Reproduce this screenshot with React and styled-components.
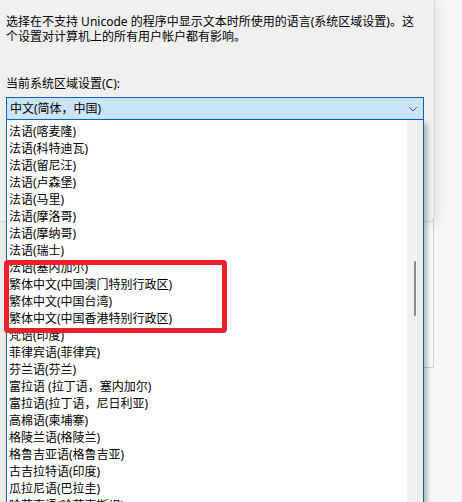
import React from "react";
import styled, { createGlobalStyle } from "styled-components";

const GlobalStyle = createGlobalStyle`
	html, body {
		margin: 0;
		padding: 0;
		background: #f6f6f6;
	}
	body {
		font-family: "Noto Sans", "Noto Sans CJK SC", sans-serif;
		font-size: 12px;
		color: #000000;
	}
`;

const Screen = styled.div`
	position: relative;
	width: 462px;
	height: 502px;
	overflow: hidden;
	background: linear-gradient(90deg, #ececec 0px, #f4f4f4 60px, #f7f7f7 100%);
`;

// window sitting behind the dialog, only its right edge peeks out
const BehindFrame = styled.div`
	position: absolute;
	left: 300px;
	top: 180px;
	width: 132px;
	height: 186px;
	border: 1px solid #cfcfcf;
	background: linear-gradient(90deg, #f3f3f3, #fafafa);
`;

const Dialog = styled.div`
	position: relative;
	width: 435px;
	height: 222px;
	box-sizing: border-box;
	background: #f0f0f0;
	border-right: 1px solid #d6d6d6;
	border-bottom: 1px solid #d6d6d6;
	border-bottom-right-radius: 6px;
	box-shadow: 4px 0 14px rgba(0, 0, 0, 0.08);
	padding: 14px 0 0 6px;
`;

const Description = styled.p`
	margin: 0;
	line-height: 15px;
	white-space: nowrap;
`;

const FieldLabel = styled.div`
	margin-top: 32px;
	line-height: 15px;
`;

const ComboWrap = styled.div`
	position: relative;
	margin-top: 6px;
	width: 418px;
`;

const ComboBox = styled.div`
	display: flex;
	align-items: center;
	justify-content: space-between;
	height: 23px;
	box-sizing: border-box;
	padding: 0 4px 0 3px;
	background: #cce4f7;
	border: 1px solid #0067c0;
`;

const ComboText = styled.span`
	line-height: 21px;
`;

const Chevron = styled.svg`
	width: 10px;
	height: 6px;
	margin-right: 1px;
`;

const DropList = styled.div`
	position: absolute;
	left: 0;
	top: 23px;
	width: 418px;
	height: 400px;
	box-sizing: border-box;
	display: flex;
	background: #ffffff;
	border-left: 1px solid #0067c0;
	border-right: 1px solid #0067c0;
	box-shadow: 3px 3px 5px rgba(0, 0, 0, 0.28);
	z-index: 2;
`;

const Items = styled.ul`
	flex: 1;
	margin: 0;
	padding: 3px 0 0 2px;
	list-style: none;
`;

const Item = styled.li`
	height: 17px;
	line-height: 17px;
	white-space: nowrap;
`;

const ScrollTrack = styled.div`
	display: flex;
	justify-content: center;
	align-items: flex-start;
	width: 16px;
	padding-top: 141px;
	box-sizing: border-box;
	background: #f0f0f0;
`;

const Thumb = styled.div`
	width: 2px;
	height: 55px;
	border-radius: 1px;
	background: #8a8a8a;
`;

const Highlight = styled.div`
	position: absolute;
	left: 4px;
	top: 260px;
	width: 223px;
	height: 73px;
	box-sizing: border-box;
	border: 5px solid #e8202b;
	border-radius: 4px;
	z-index: 3;
`;

const locales = [
	"法语(喀麦隆)",
	"法语(科特迪瓦)",
	"法语(留尼汪)",
	"法语(卢森堡)",
	"法语(马里)",
	"法语(摩洛哥)",
	"法语(摩纳哥)",
	"法语(瑞士)",
	"法语(塞内加尔)",
	"繁体中文(中国澳门特别行政区)",
	"繁体中文(中国台湾)",
	"繁体中文(中国香港特别行政区)",
	"梵语(印度)",
	"菲律宾语(菲律宾)",
	"芬兰语(芬兰)",
	"富拉语 (拉丁语，塞内加尔)",
	"富拉语(拉丁语，尼日利亚)",
	"高棉语(柬埔寨)",
	"格陵兰语(格陵兰)",
	"格鲁吉亚语(格鲁吉亚)",
	"古吉拉特语(印度)",
	"瓜拉尼语(巴拉圭)",
	"哈萨克语(哈萨克斯坦)",
];

const App = () => {
	return (
		<Screen>
			<GlobalStyle />
			<BehindFrame />
			<Dialog>
				<Description>
					选择在不支持 Unicode 的程序中显示文本时所使用的语言(系统区域设置)。这
					<br />
					个设置对计算机上的所有用户帐户都有影响。
				</Description>
				<FieldLabel>当前系统区域设置(C):</FieldLabel>
				<ComboWrap>
					<ComboBox>
						<ComboText>中文(简体，中国)</ComboText>
						<Chevron viewBox="0 0 10 6">
							<path d="M1 1 L5 5 L9 1" fill="none" stroke="#5f5f5f" strokeWidth="1" />
						</Chevron>
					</ComboBox>
					<DropList>
						<Items>
							{locales.map((name) => (
								<Item key={name}>{name}</Item>
							))}
						</Items>
						<ScrollTrack>
							<Thumb />
						</ScrollTrack>
					</DropList>
				</ComboWrap>
			</Dialog>
			<Highlight />
		</Screen>
	);
};

export default App;
